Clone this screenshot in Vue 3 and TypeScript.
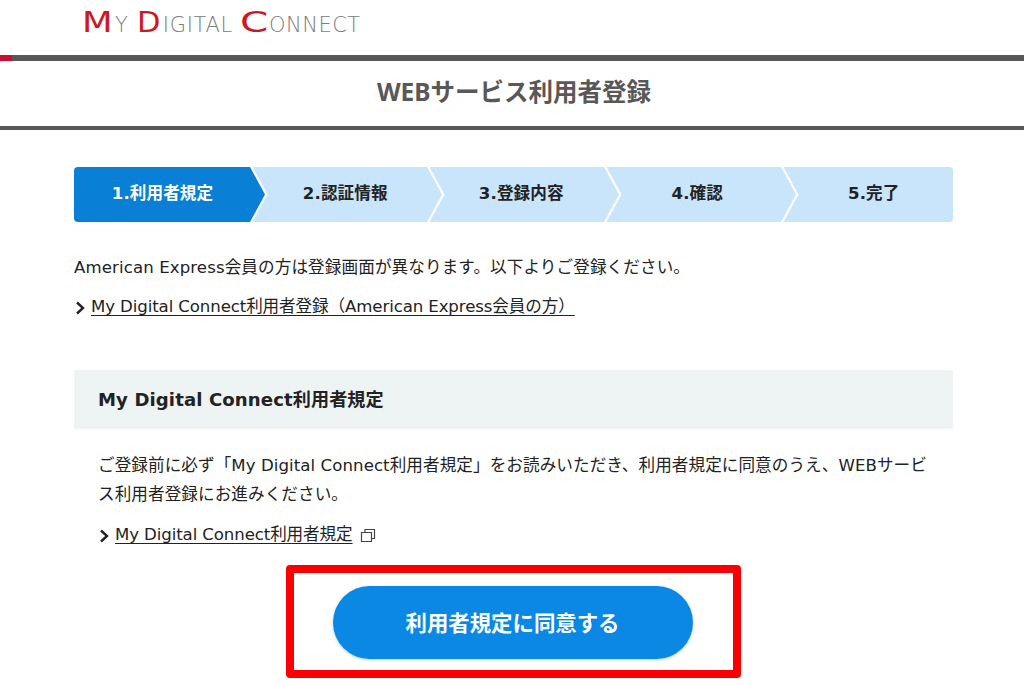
<script setup lang="ts">
const steps: string[] = ['1.利用者規定', '2.認証情報', '3.登録内容', '4.確認', '5.完了']
</script>

<template>
  <div class="page">
    <header class="logo-bar">
      <div class="logo">
        <span class="big m">M</span><span class="small y">Y</span>
        <span class="big d">D</span><span class="small igital">IGITAL</span>
        <span class="big c">C</span><span class="small onnect">ONNECT</span>
      </div>
    </header>
    <div class="rule"><span class="rule-red"></span></div>
    <h1 class="title">WEBサービス利用者登録</h1>

    <main class="content">
      <ol class="steps">
        <li v-for="(s, i) in steps" :key="s" class="step" :class="['s' + (i + 1), { active: i === 0 }]">{{ s }}</li>
      </ol>

      <p class="note">American Express会員の方は登録画面が異なります。以下よりご登録ください。</p>
      <p class="link-row">
        <svg class="arrow" width="10" height="14" viewBox="0 0 10 14"><path d="M2 1.5l6 5.5-6 5.5" fill="none" stroke="#222" stroke-width="2.4" /></svg>
        <a class="link">My Digital Connect利用者登録（American Express会員の方）</a>
      </p>

      <section class="terms">
        <h2 class="terms-head">My Digital Connect利用者規定</h2>
        <div class="terms-body">
          <p class="terms-text">ご登録前に必ず「My Digital Connect利用者規定」をお読みいただき、利用者規定に同意のうえ、WEBサービス利用者登録にお進みください。</p>
          <p class="link-row inner">
            <svg class="arrow" width="10" height="14" viewBox="0 0 10 14"><path d="M2 1.5l6 5.5-6 5.5" fill="none" stroke="#222" stroke-width="2.4" /></svg>
            <a class="link">My Digital Connect利用者規定</a>
            <svg class="ext" width="16" height="15" viewBox="0 0 16 15"><path d="M1.5 4.5h10v9h-10zM5 4.5V1.5h9.5v9h-3" fill="none" stroke="#444" stroke-width="1.2" /></svg>
          </p>
          <div class="action">
            <button class="agree" type="button">利用者規定に同意する</button>
            <span class="highlight"></span>
          </div>
        </div>
      </section>
    </main>
  </div>
</template>

<style scoped>
.page {
  width: 1024px;
  height: 685px;
  overflow: hidden;
  background: #fff;
  color: #222;
  font-family: "DejaVu Sans", "Noto Sans CJK JP", sans-serif;
  font-size: 16.6px;
  letter-spacing: 0.1px;
}
.logo-bar {
  height: 55px;
  box-sizing: border-box;
  padding: 5px 0 0 82px;
}
.logo {
  display: flex;
  align-items: baseline;
  font-family: "DejaVu Sans", sans-serif;
  line-height: 34px;
  color: #7c7c7c;
  white-space: nowrap;
  letter-spacing: 0;
}
.big {
  display: inline-block;
  font-size: 29px;
  color: #cf1720;
  transform-origin: left center;
}
.big.m { width: 33px; transform: scaleX(1.22); }
.big.d { width: 26px; margin-left: 9px; transform: scaleX(1.05); }
.big.c { width: 29px; margin-left: 7px; transform: scaleX(1.4); }
.small {
  font-size: 21px;
  font-weight: 200;
}
.igital { letter-spacing: 0.7px; }
.onnect { letter-spacing: 0.5px; }
.rule {
  height: 6px;
  background: #595757;
}
.rule-red {
  display: block;
  width: 12px;
  height: 6px;
  background: #c8102e;
}
.title {
  margin: 0;
  height: 59px;
  padding: 0 0 6px 4px;
  border-bottom: 4px solid #595757;
  display: flex;
  align-items: center;
  justify-content: center;
  font-size: 24.5px;
  font-weight: 700;
  color: #595757;
  letter-spacing: 0;
  font-family: "Noto Sans", "Noto Sans CJK JP", sans-serif;
}
.content {
  padding: 37px 71px 0 74px;
}
.steps {
  list-style: none;
  margin: 0;
  padding: 0;
  display: flex;
  height: 55px;
  border-radius: 4px;
  overflow: hidden;
}
.step {
  flex: none;
  width: 189.5px;
  margin-left: -12.5px;
  padding-bottom: 6px;
  display: flex;
  align-items: center;
  justify-content: center;
  box-sizing: border-box;
  background: #c8e5fb;
  font-weight: 700;
  color: #222;
  clip-path: polygon(0 0, calc(100% - 15px) 0, 100% 50%, calc(100% - 15px) 100%, 0 100%, 15px 50%);
}
.s1 {
  width: 191px;
  margin-left: 0;
  padding-right: 14px;
  clip-path: polygon(0 0, calc(100% - 15px) 0, 100% 50%, calc(100% - 15px) 100%, 0 100%);
}
.s2 { padding-right: 4px; }
.s3 { padding-right: 6px; }
.s4 { padding-right: 8px; }
.s5 {
  flex: 1;
  padding-left: 11px;
  clip-path: polygon(0 0, 100% 0, 100% 100%, 0 100%, 15px 50%);
}
.active {
  background: #0a7fd6;
  color: #fff;
}
.note {
  margin: 34px 0 0;
  line-height: 24px;
  white-space: nowrap;
}
.link-row {
  margin: 15px 0 0;
  display: flex;
  align-items: center;
  line-height: 24px;
  white-space: nowrap;
}
.arrow {
  flex: none;
  margin: 1px 6px 0 1px;
}
.link {
  color: #222;
  letter-spacing: -0.11px;
  text-decoration: underline;
  text-underline-offset: 3px;
}
.terms {
  margin-top: 51px;
}
.terms-head {
  margin: 0;
  height: 55px;
  padding: 0 0 4px 24px;
  display: flex;
  align-items: center;
  background: #eef3f3;
  font-size: 18.1px;
  font-weight: 700;
  color: #222;
}
.terms-body {
  padding: 22px 24px 0;
}
.terms-text {
  margin: 0;
  line-height: 29px;
  letter-spacing: 0.07px;
}
.link-row.inner {
  margin-top: 14px;
}
.ext {
  flex: none;
  margin-left: 7px;
}
.action {
  position: relative;
  margin-top: 39px;
  padding-right: 2px;
  display: flex;
  justify-content: center;
}
.agree {
  width: 360px;
  height: 73px;
  padding: 0 0 3px;
  border: none;
  border-radius: 37px;
  background: #0a88e4;
  box-shadow: 0 1px 3px rgba(10, 100, 180, 0.3);
  color: #fff;
  font-family: "Noto Sans CJK JP", sans-serif;
  font-size: 21.4px;
  font-weight: 700;
}
.highlight {
  position: absolute;
  left: 188px;
  top: -21px;
  width: 455px;
  height: 113px;
  box-sizing: border-box;
  border: 8px solid #fb0000;
  border-radius: 4px;
  pointer-events: none;
}
</style>
